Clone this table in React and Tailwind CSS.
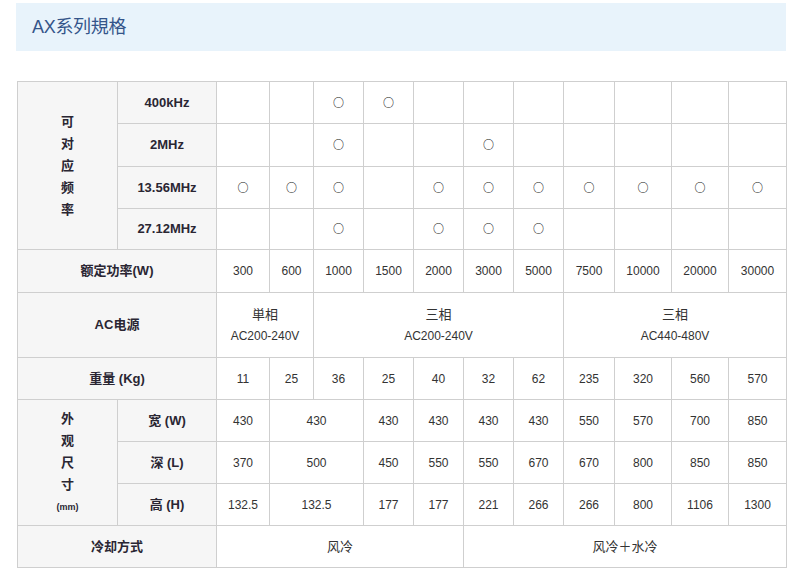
import React from 'react';

const font = { fontFamily: '"Liberation Sans", "Noto Sans CJK SC", sans-serif' };

const O = '○';

const freqRows = [
  { label: '400kHz', h: 'h-[42px]', marks: [0, 0, 1, 1, 0, 0, 0, 0, 0, 0, 0] },
  { label: '2MHz', h: 'h-[43px]', marks: [0, 0, 1, 0, 0, 1, 0, 0, 0, 0, 0] },
  { label: '13.56MHz', h: 'h-[42px]', marks: [1, 1, 1, 0, 1, 1, 1, 1, 1, 1, 1] },
  { label: '27.12MHz', h: 'h-[41px]', marks: [0, 0, 1, 0, 1, 1, 1, 0, 0, 0, 0] },
];

const power = ['300', '600', '1000', '1500', '2000', '3000', '5000', '7500', '10000', '20000', '30000'];
const weight = ['11', '25', '36', '25', '40', '32', '62', '235', '320', '560', '570'];

const dims = [
  { label: '宽 (W)', vals: ['430', '430', '430', '430', '430', '430', '550', '570', '700', '850'] },
  { label: '深 (L)', vals: ['370', '500', '450', '550', '550', '670', '670', '800', '850', '850'] },
  { label: '高 (H)', vals: ['132.5', '132.5', '177', '177', '221', '266', '266', '800', '1106', '1300'] },
];

const widths = [100, 99, 53, 44, 50, 50, 50, 50, 50, 51, 57, 57, 58];

const th = 'border border-[#cfcfcf] bg-[#f6f6f6] font-bold text-[13px] text-[#2a2633] text-center align-middle p-0';
const td = 'border border-[#cfcfcf] bg-white text-[12px] text-[#333] text-center align-middle p-0';

const Stack = ({ chars, extra }) => (
  <div className="flex flex-col items-center">
    {chars.map((c) => (
      <span key={c} className="leading-[22px]">{c}</span>
    ))}
    {extra && <span className="text-[9px] leading-[22px]">{extra}</span>}
  </div>
);

export default function App() {
  return (
    <div className="w-[800px] h-[577px] bg-white pt-[3px]" style={font}>
      <div className="ml-[16px] w-[770px] h-[48px] bg-[#e8f3fb] flex items-center pl-[16px]">
        <h2 className="text-[18px] text-[#34558a] font-normal tracking-[-0.3px]">AX系列規格</h2>
      </div>

      <table className="ml-[17px] mt-[30px] w-[769px] table-fixed border-collapse">
        <colgroup>
          {widths.map((w, i) => (
            <col key={i} style={{ width: w }} />
          ))}
        </colgroup>
        <tbody>
          {freqRows.map((r, ri) => (
            <tr key={r.label} className={r.h}>
              {ri === 0 && (
                <th rowSpan={4} className={th}>
                  <Stack chars={['可', '对', '应', '频', '率']} />
                </th>
              )}
              <th className={th}>{r.label}</th>
              {r.marks.map((m, i) => (
                <td key={i} className={td}>
                  {m ? (
                    <span className="font-['Noto_Sans_CJK_JP'] text-[11px] font-bold text-[#111] leading-none">{O}</span>
                  ) : ''}
                </td>
              ))}
            </tr>
          ))}

          <tr className="h-[43px]">
            <th colSpan={2} className={th}>额定功率(W)</th>
            {power.map((v, i) => (
              <td key={i} className={td}>{v}</td>
            ))}
          </tr>

          <tr className="h-[65px]">
            <th colSpan={2} className={th}>AC电源</th>
            <td colSpan={2} className={td}>
              <div className="text-[13px] leading-[22px]">単相</div>
              <div className="leading-[20px]">AC200-240V</div>
            </td>
            <td colSpan={5} className={td}>
              <div className="text-[13px] leading-[22px]">三相</div>
              <div className="leading-[20px]">AC200-240V</div>
            </td>
            <td colSpan={4} className={td}>
              <div className="text-[13px] leading-[22px]">三相</div>
              <div className="leading-[20px]">AC440-480V</div>
            </td>
          </tr>

          <tr className="h-[42px]">
            <th colSpan={2} className={th}>重量 (Kg)</th>
            {weight.map((v, i) => (
              <td key={i} className={td}>{v}</td>
            ))}
          </tr>

          {dims.map((d, ri) => (
            <tr key={d.label} className="h-[42px]">
              {ri === 0 && (
                <th rowSpan={3} className={th}>
                  <Stack chars={['外', '观', '尺', '寸']} extra="(mm)" />
                </th>
              )}
              <th className={th}>{d.label}</th>
              {d.vals.map((v, i) => (
                <td key={i} colSpan={i === 1 ? 2 : 1} className={td}>{v}</td>
              ))}
            </tr>
          ))}

          <tr className="h-[42px]">
            <th colSpan={2} className={th}>冷却方式</th>
            <td colSpan={5} className={`${td} text-[13px]`}>风冷</td>
            <td colSpan={6} className={`${td} text-[13px]`}>风冷＋水冷</td>
          </tr>
        </tbody>
      </table>
    </div>
  );
}
